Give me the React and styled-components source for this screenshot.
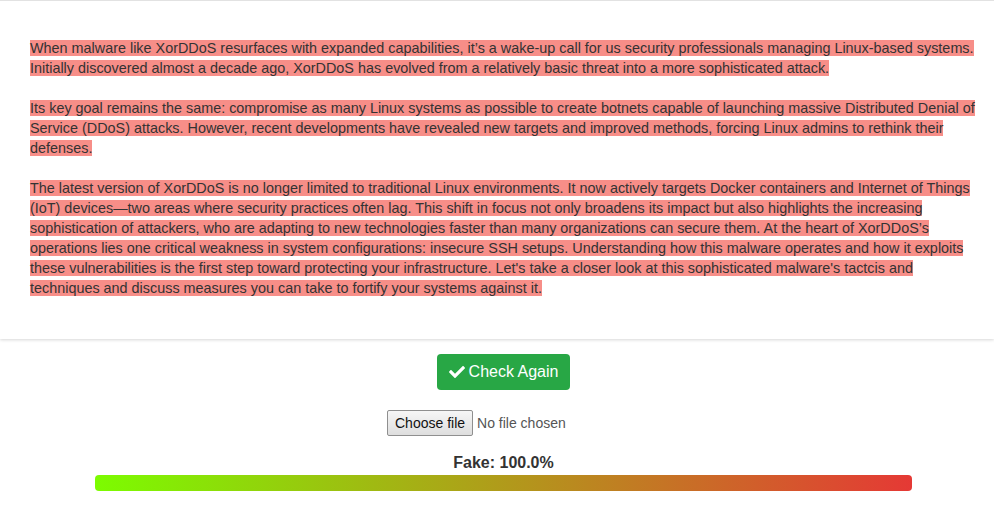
import React from 'react';
import styled, { createGlobalStyle } from 'styled-components';
import { FaCheck } from 'react-icons/fa';

const GlobalStyle = createGlobalStyle`
  html, body {
    margin: 0;
    padding: 0;
    background: #fff;
    font-family: "Liberation Sans", Arial, sans-serif;
    color: #333;
  }
`;

const paragraphs = [
  "When malware like XorDDoS resurfaces with expanded capabilities, it\u2019s a wake-up call for us security professionals managing Linux-based systems. Initially discovered almost a decade ago, XorDDoS has evolved from a relatively basic threat into a more sophisticated attack.",
  "Its key goal remains the same: compromise as many Linux systems as possible to create botnets capable of launching massive Distributed Denial of Service (DDoS) attacks. However, recent developments have revealed new targets and improved methods, forcing Linux admins to rethink their defenses.",
  "The latest version of XorDDoS is no longer limited to traditional Linux environments. It now actively targets Docker containers and Internet of Things (IoT) devices\u2014two areas where security practices often lag. This shift in focus not only broadens its impact but also highlights the increasing sophistication of attackers, who are adapting to new technologies faster than many organizations can secure them. At the heart of XorDDoS\u2019s operations lies one critical weakness in system configurations: insecure SSH setups. Understanding how this malware operates and how it exploits these vulnerabilities is the first step toward protecting your infrastructure. Let's take a closer look at this sophisticated malware's tactcis and techniques and discuss measures you can take to fortify your systems against it.",
];

const ResultCard = styled.section`
  background: #fff;
  padding: 37px 16px 41px 30px;
  box-shadow: 0 1px 3px rgba(0, 0, 0, 0.16);
  border-top: 1px solid #e2e2e2;
`;

const Para = styled.p`
  margin: 0 0 20px;
  font-size: 14.4px;
  line-height: 20px;
  &:last-child {
    margin-bottom: 0;
  }
`;

const Marked = styled.span`
  background: #f78e88;
`;

const Controls = styled.div`
  display: flex;
  flex-direction: column;
  align-items: center;
  padding: 15px 82px 0 95px;
`;

const CheckButton = styled.button`
  display: inline-flex;
  align-items: center;
  gap: 4px;
  height: 36px;
  padding: 0 12px;
  border: none;
  border-radius: 4px;
  background: #28a745;
  color: #fff;
  font-family: "Liberation Sans", Arial, sans-serif;
  font-size: 16px;
  cursor: pointer;
  svg {
    width: 16px;
    height: 16px;
  }
`;

const FilePicker = styled.label`
  display: flex;
  align-items: center;
  gap: 4px;
  width: 233px;
  margin-top: 20px;
  font-size: 14px;
  cursor: pointer;
  input {
    display: none;
  }
`;

const PickButton = styled.span`
  display: inline-flex;
  align-items: center;
  height: 26px;
  box-sizing: border-box;
  padding: 0 7px;
  border: 1px solid #8f8f8f;
  border-radius: 2px;
  background: linear-gradient(#f6f6f6, #dedede);
  color: #111;
`;

const PickStatus = styled.span`
  color: #555;
`;

const ScoreLabel = styled.div`
  margin-top: 17px;
  font-size: 16px;
  font-weight: bold;
  line-height: 20px;
  color: #333;
`;

const Meter = styled.div`
  align-self: stretch;
  height: 16px;
  margin-top: 2px;
  border-radius: 4px;
  background: linear-gradient(to right, #7cfc00, #e53935);
`;

export default function App() {
  return (
    <>
      <GlobalStyle />
      <ResultCard>
        {paragraphs.map((text, i) => (
          <Para key={i}>
            <Marked>{text}</Marked>
          </Para>
        ))}
      </ResultCard>
      <Controls>
        <CheckButton>
          <FaCheck /> Check Again
        </CheckButton>
        <FilePicker>
          <input type="file" />
          <PickButton>Choose file</PickButton>
          <PickStatus>No file chosen</PickStatus>
        </FilePicker>
        <ScoreLabel>Fake: 100.0%</ScoreLabel>
        <Meter />
      </Controls>
    </>
  );
}
